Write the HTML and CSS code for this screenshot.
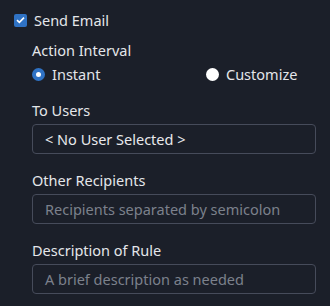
FILE: index.html
```html
<!DOCTYPE html>
<html lang="en">
<head>
  <meta charset="UTF-8">
  <title>Send Email</title>
  <link rel="stylesheet" href="styles.css">
</head>
<body>

  <!-- Send Email toggle -->
  <label class="check-row">
    <span class="check-box">
      <svg width="9" height="8" viewBox="0 0 9 8"><path d="M1 4.2 L3.4 6.4 L8 1.6" fill="none" stroke="#fff" stroke-width="1.6"/></svg>
    </span>
    Send Email
  </label>

  <div class="panel">
    <div class="field">
      <div class="label">Action Interval</div>
      <div class="radio-row">
        <label class="radio first"><span class="dot on"></span>Instant</label>
        <label class="radio"><span class="dot"></span>Customize</label>
      </div>
    </div>

    <div class="field">
      <div class="label">To Users</div>
      <div class="box value">&lt; No User Selected &gt;</div>
    </div>

    <div class="field">
      <div class="label">Other Recipients</div>
      <div class="box hint">Recipients separated by semicolon</div>
    </div>

    <div class="field">
      <div class="label">Description of Rule</div>
      <div class="box hint">A brief description as needed</div>
    </div>
  </div>

</body>
</html>
```

FILE: styles.css
```css
  body, html {
    margin: 0;
    padding: 0;
    background-color: #1b1f29;
    color: #e4e6ea;
    font-family: "Noto Sans", sans-serif;
    font-size: 14.5px;
  }
  body {
    padding: 10px 14px 0 14px;
  }
  .check-row {
    display: flex;
    align-items: center;
    gap: 7px;
    height: 20px;
  }
  .check-box {
    width: 13px;
    height: 13px;
    border-radius: 2px;
    background-color: #2f72c4;
    display: flex;
    align-items: center;
    justify-content: center;
  }
  .panel {
    padding-left: 18px;
    display: flex;
    flex-direction: column;
    gap: 16px;
    margin-top: 10px;
  }
  .field {
    display: flex;
    flex-direction: column;
    gap: 4px;
  }
  .label {
    line-height: 20px;
    height: 20px;
  }
  .radio-row {
    display: flex;
  }
  .radio {
    display: flex;
    align-items: center;
    gap: 7px;
    height: 20px;
  }
  .radio.first {
    width: 174px;
  }
  .dot {
    width: 13px;
    height: 13px;
    border-radius: 50%;
    background-color: #fff;
    box-sizing: border-box;
  }
  .dot.on {
    border: 4px solid #2f72c4;
  }
  .box {
    height: 30px;
    box-sizing: border-box;
    border: 1px solid #464b5a;
    border-radius: 4px;
    padding: 0 12px;
    display: flex;
    align-items: center;
  }
  .value {
    color: #e8e9ec;
  }
  .hint {
    color: #7c818c;
  }
```
